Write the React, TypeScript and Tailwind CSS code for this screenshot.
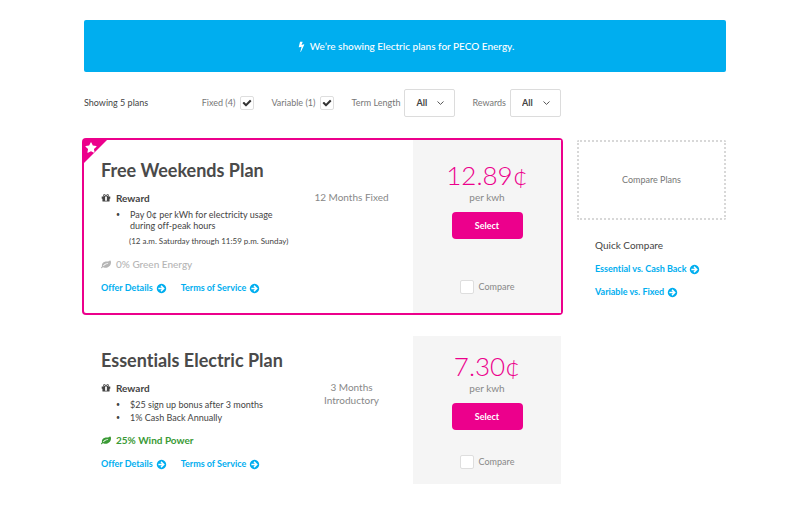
import React from 'react';

type IconProps = { d: string; className?: string };

const Icon: React.FC<IconProps> = ({ d, className }) => (
  <svg viewBox="0 0 1792 1792" fill="currentColor" aria-hidden="true" className={className}>
    <path d={d} />
  </svg>
);

const BOLT =
  'M1333 566q18 20 7 44l-540 1157q-13 25-42 25-4 0-14-2-17-5-25.5-19t-4.5-30l197-808-406 101q-4 1-12 1-18 0-31-11-18-15-13-39l201-825q4-16 18-26t32-10h328q19 0 32 12.5t13 29.5q0 8-5 18l-171 463 396-98q8-2 12-2 19 0 34 15z';
const GIFT =
  'M1056 1356v-716h-320v716q0 25 18 38.5t46 13.5h192q28 0 46-13.5t18-38.5zm-456-844h195l-126-161q-26-31-69-31-40 0-68 28t-28 68 28 68 68 28zm688-96q0-40-28-68t-68-28q-43 0-69 31l-125 161h194q40 0 68-28t28-68zm376 256v320q0 14-9 23t-23 9h-96v416q0 40-28 68t-68 28h-1088q-40 0-68-28t-28-68v-416h-96q-14 0-23-9t-9-23v-320q0-14 9-23t23-9h440q-93 0-158.5-65.5t-65.5-158.5 65.5-158.5 158.5-65.5q107 0 168 77l128 165 128-165q61-77 168-77 93 0 158.5 65.5t65.5 158.5-65.5 158.5-158.5 65.5h440q14 0 23 9t9 23z';
const LEAF =
  'M1280 832q0-26-19-45t-45-19q-172 0-318 49.5t-259.5 134-235.5 219.5q-19 21-19 45 0 26 19 45t45 19q24 0 45-19 27-24 74-71t67-66q137-124 268.5-176t313.5-52q26 0 45-19t19-45zm512-198q0 95-20 193-46 224-184.5 383t-357.5 268q-214 108-438 108-148 0-286-47-15-5-88-42t-96-37q-16 0-39.5 32t-45 70-52.5 70-60 32q-43 0-63.5-17.5t-45.5-59.5q-2-4-6-11t-5.5-10-3-9.5-1.5-13.5q0-35 31-73.5t68-65.5 68-56 31-48q0-4-14-38t-16-44q-9-51-9-104 0-115 43.5-220t119-184.5 170.5-139 204-95.5q55-18 145-25.5t179.5-9 178.5-6 163.5-24 113.5-56.5l29.5-29.5 29.5-28 27-20 36.5-16 43.5-4.5q39 0 70.5 46t47.5 112 24 124 8 96z';
const ARROW =
  'M1413 896q0-27-18-45l-91-91-362-362q-18-18-45-18t-45 18l-91 91q-18 18-18 45t18 45l189 189h-502q-26 0-45 19t-19 45v128q0 26 19 45t45 19h502l-189 189q-18 18-18 45t18 45l91 91q18 18 45 18t45-18l362-362 91-91q18-18 18-45zm251 0q0 209-103 385.5t-279.5 279.5-385.5 103-385.5-103-279.5-279.5-103-385.5 103-385.5 279.5-279.5 385.5-103 385.5 103 279.5 279.5 103 385.5z';
const CHECK =
  'M1671 566q0 40-28 68l-724 724-136 136q-28 28-68 28t-68-28l-136-136-362-362q-28-28-28-68t28-68l136-136q28-28 68-28t68 28l294 295 656-657q28-28 68-28t68 28l136 136q28 28 28 68z';
const STAR =
  'M1728 647q0 22-26 48l-363 354 86 500q1 7 1 20 0 21-10.5 35.5t-30.5 14.5q-19 0-40-12l-449-236-449 236q-22 12-40 12-21 0-31.5-14.5t-10.5-35.5q0-6 2-20l86-500-364-354q-25-27-25-48 0-37 56-46l502-73 225-455q19-41 49-41t49 41l225 455 502 73q56 9 56 46z';

type Plan = {
  id: string;
  name: string;
  rewards: string[];
  note?: string;
  energy: string;
  green: boolean;
  term: string;
  price: string;
  featured?: boolean;
};

const plans: Plan[] = [
  {
    id: 'free-weekends',
    name: 'Free Weekends Plan',
    rewards: ['Pay 0¢ per kWh for electricity usage during off-peak hours'],
    note: '(12 a.m. Saturday through 11:59 p.m. Sunday)',
    energy: '0% Green Energy',
    green: false,
    term: '12 Months Fixed',
    price: '12.89¢',
    featured: true,
  },
  {
    id: 'essentials',
    name: 'Essentials Electric Plan',
    rewards: ['$25 sign up bonus after 3 months', '1% Cash Back Annually'],
    energy: '25% Wind Power',
    green: true,
    term: '3 Months Introductory',
    price: '7.30¢',
  },
];

const ArrowLink: React.FC<{ children: React.ReactNode }> = ({ children }) => (
  <a href="#" className="flex items-center gap-[3px] text-[9px] leading-3 font-bold whitespace-nowrap text-[#00aeef]">
    {children}
    <Icon d={ARROW} className="size-[11px]" />
  </a>
);

const Checkbox: React.FC<{ id: string; checked?: boolean }> = ({ id, checked }) => (
  <span className="relative flex size-[14px]">
    <input
      id={id}
      type="checkbox"
      defaultChecked={checked}
      className="peer size-full appearance-none rounded-xs border border-[#dedede] bg-white"
    />
    <Icon d={CHECK} className="pointer-events-none absolute inset-0 m-auto hidden size-[10px] text-[#333] peer-checked:block" />
  </span>
);

const FilterCheck: React.FC<{ id: string; label: string }> = ({ id, label }) => (
  <div className="flex items-center gap-[5px]">
    <label htmlFor={id}>{label}</label>
    <Checkbox id={id} checked />
  </div>
);

const FilterSelect: React.FC<{ id: string; label: string }> = ({ id, label }) => (
  <div className="flex items-center gap-1">
    <label htmlFor={id}>{label}</label>
    <span className="relative flex">
      <select
        id={id}
        className="h-7 w-[51px] appearance-none rounded-xs border border-[#dcdcdc] bg-white pl-[11px] font-bold text-[#444]"
      >
        <option>All</option>
      </select>
      <svg
        viewBox="0 0 7 4"
        fill="none"
        stroke="#555"
        aria-hidden="true"
        className="pointer-events-none absolute top-3 right-[11px] h-1 w-[7px]"
      >
        <path d="M0.5 0.5 3.5 3.4 6.5 0.5" />
      </svg>
    </span>
  </div>
);

const PlanCard: React.FC<{ plan: Plan }> = ({ plan }) => (
  <article className={plan.featured ? 'relative flex rounded-xs ring-2 ring-[#ec008c]' : 'relative flex'}>
    {plan.featured && (
      <span className="absolute top-0 left-0 size-[23px] bg-[#ec008c] text-white [clip-path:polygon(0_0,100%_0,0_100%)]">
        <Icon d={STAR} className="mt-0.5 ml-px size-3" />
      </span>
    )}
    <div className={plan.featured ? 'flex-1 pt-[18px] pb-[19px] pl-[17px]' : 'flex-1 pt-3 pb-[14px] pl-[17px]'}>
      <h2 className="text-[18px] leading-6 font-bold whitespace-nowrap text-[#4a4a4a]">{plan.name}</h2>
      <div className="mt-[9px] flex items-start">
        <div className="flex-1">
          <h3 className="flex items-center gap-[5px] text-[10px] leading-[14px] font-bold text-[#444]">
            <Icon d={GIFT} className="size-[10px]" />
            Reward
          </h3>
          <ul className="mt-1 space-y-[2px] pl-[15px] text-[9px] leading-[11px] text-[#444]">
            {plan.rewards.map(reward => (
              <li key={reward} className="flex gap-[10px]">
                <span className="text-[7px]">•</span>
                <span className="max-w-[148px]">{reward}</span>
              </li>
            ))}
          </ul>
          {plan.note && (
            <p className="mt-1 ml-7 text-[8px] leading-3 whitespace-nowrap text-[#444]">{plan.note}</p>
          )}
        </div>
        <p className="w-[123px] px-5 text-center text-[10px] leading-[13px] text-[#888]">{plan.term}</p>
      </div>
      <p
        className={
          plan.green
            ? 'mt-[10px] flex items-center gap-[5px] text-[10px] leading-[14px] font-bold text-[#3a9a35]'
            : 'mt-[10px] flex items-center gap-[5px] text-[10px] leading-[14px] font-medium text-[#b5b5b5]'
        }
      >
        <Icon d={LEAF} className="size-[10px]" />
        {plan.energy}
      </p>
      <div className="mt-[11px] flex gap-[14px]">
        <ArrowLink>Offer Details</ArrowLink>
        <ArrowLink>Terms of Service</ArrowLink>
      </div>
    </div>
    <div
      className={
        plan.featured
          ? 'flex w-[148px] flex-col items-center bg-[#f5f5f5] pt-[21px] pb-[19px]'
          : 'flex w-[148px] flex-col items-center bg-[#f5f5f5] pt-4 pb-[15px]'
      }
    >
      <p className="text-[26px] leading-7 font-light text-[#ec008c]">{plan.price}</p>
      <p className="mt-px text-[10px] leading-[14px] text-[#888]">per kwh</p>
      <button type="button" className="mt-2 h-[27px] w-[71px] rounded-sm bg-[#ec008c] text-[9px] font-bold text-white">
        Select
      </button>
      <div className="mt-auto flex items-center gap-[5px] text-[9px] leading-[14px] text-[#888]">
        <Checkbox id={`compare-${plan.id}`} />
        <label htmlFor={`compare-${plan.id}`}>Compare</label>
      </div>
    </div>
  </article>
);

export default function App() {
  return (
    <main className="mx-auto max-w-[642px] bg-white py-5 font-['Lato',sans-serif] [font-variant-ligatures:none]">
      <div className="flex h-[52px] items-center justify-center gap-[3px] rounded-xs bg-[#00aeef] text-[10px] font-medium text-white">
        <Icon d={BOLT} className="size-[11px]" />
        We’re showing Electric plans for PECO Energy.
      </div>

      <div className="mt-[17px] flex gap-4">
        <div className="flex-1">
          <form className="flex items-center justify-between text-[9px] whitespace-nowrap text-[#777]">
            <p className="text-[#444]">Showing 5 plans</p>
            <div className="flex items-center gap-[17px]">
              <FilterCheck id="fixed" label="Fixed (4)" />
              <FilterCheck id="variable" label="Variable (1)" />
              <FilterSelect id="term-length" label="Term Length" />
              <FilterSelect id="rewards" label="Rewards" />
            </div>
          </form>
          <div className="mt-[23px] space-y-[23px]">
            {plans.map(plan => (
              <PlanCard key={plan.id} plan={plan} />
            ))}
          </div>
        </div>

        <aside className="w-[149px] pt-[51px]">
          <div className="flex h-20 items-center justify-center rounded-xs border-2 border-dotted border-[#d8d8d8] text-[9px] text-[#777]">
            Compare Plans
          </div>
          <div className="mt-[18px] space-y-[11px] pl-[18px]">
            <h3 className="text-[10px] leading-[14px] text-[#444]">Quick Compare</h3>
            <ArrowLink>Essential vs. Cash Back</ArrowLink>
            <ArrowLink>Variable vs. Fixed</ArrowLink>
          </div>
        </aside>
      </div>
    </main>
  );
}
